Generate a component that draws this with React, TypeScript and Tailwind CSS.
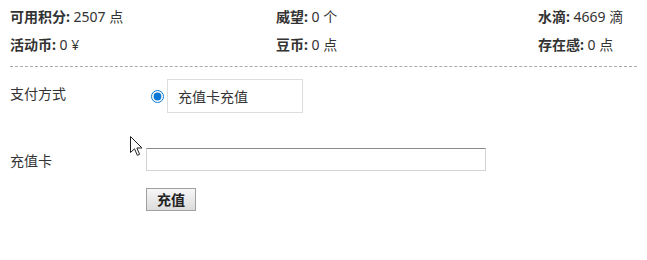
import React from "react";

const stats = [
  [
    { label: "可用积分:", value: "2507 点" },
    { label: "威望:", value: "0 个" },
    { label: "水滴:", value: "4669 滴" },
  ],
  [
    { label: "活动币:", value: "0 ¥" },
    { label: "豆币:", value: "0 点" },
    { label: "存在感:", value: "0 点" },
  ],
];

function Cursor() {
  return (
    <svg
      className="pointer-events-none absolute left-[130px] top-[136px]"
      width="13"
      height="21"
      viewBox="0 0 13 21"
    >
      <path
        d="M0.5 0.5 L0.5 16.5 L4.5 12.8 L7.3 19.3 L9.6 18.3 L6.9 12 L12 12 Z"
        fill="#fff"
        stroke="#222"
        strokeWidth="1"
        strokeLinejoin="round"
      />
    </svg>
  );
}

export default function App() {
  return (
    <div
      className="relative h-[260px] w-[647px] bg-white px-[10px] text-[14px] text-[#333]"
      style={{ fontFamily: '"Noto Sans", "Noto Sans CJK SC", sans-serif' }}
    >
      {/* account stats */}
      <div className="pt-[3px]">
        {stats.map((row, i) => (
          <div key={i} className="grid h-[28px] grid-cols-[266px_262px_1fr] items-center">
            {row.map((s) => (
              <div key={s.label} className="leading-5">
                <span className="font-bold">{s.label}</span> {s.value}
              </div>
            ))}
          </div>
        ))}
      </div>
      <div className="mt-[7px] border-t border-dashed border-[#aaa]" />

      {/* payment method */}
      <div className="mt-[12px] flex">
        <div className="w-[136px] pt-[5px] leading-5">支付方式</div>
        <label className="flex items-center">
          <input
            type="radio"
            defaultChecked
            name="pay"
            className="ml-[5px] mr-[3px] h-[13px] w-[13px] accent-[#0a78d7]"
          />
          <span className="flex h-[34px] w-[136px] items-center border border-[#ddd] pl-[10px]">
            充值卡充值
          </span>
        </label>
      </div>

      {/* card input */}
      <div className="mt-[35px] flex items-center">
        <div className="w-[136px] pt-[3px] leading-5">充值卡</div>
        <input
          type="text"
          className="h-[23px] w-[340px] border border-[#d4d4d4] border-t-[#8a8a8a] bg-white px-1 outline-none"
        />
      </div>

      <div className="mt-[17px] pl-[136px]">
        <button className="h-[23px] w-[50px] border border-[#a0a0a0] bg-gradient-to-b from-[#f7f7f7] to-[#dcdcdc] text-[14px] font-bold leading-none text-[#222]">
          充值
        </button>
      </div>

      <Cursor />
    </div>
  );
}
